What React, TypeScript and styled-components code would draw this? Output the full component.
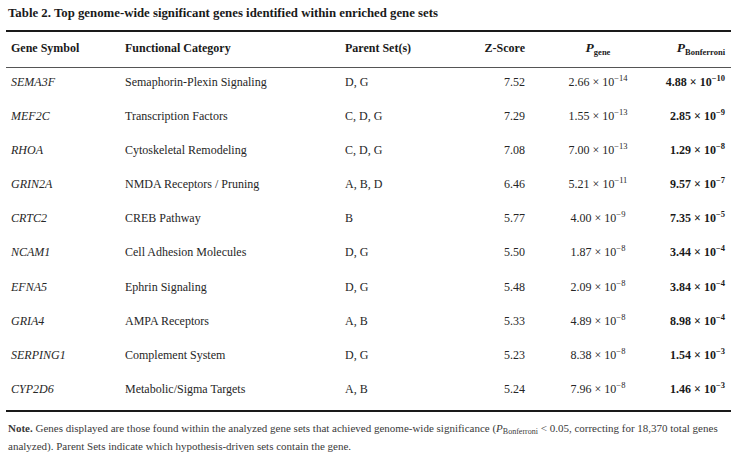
import React from "react";
import styled, { createGlobalStyle } from "styled-components";

const Global = createGlobalStyle`
  html, body { margin: 0; padding: 0; background: #fff; }
  body { font-family: "Liberation Serif", "Times New Roman", serif; color: #262626; }
`;

const Page = styled.div`
  width: 734px;
  height: 452px;
  padding: 5px 3px 0 6px;
  box-sizing: border-box;
  overflow: hidden;
`;

const Title = styled.div`
  font-weight: bold;
  font-size: 12.8px;
  line-height: 16px;
  color: #1a1a1a;
  padding-left: 2px;
`;

const Table = styled.div`
  margin-top: 9px;
  border-top: 2px solid #1a1a1a;
  border-bottom: 2px solid #1a1a1a;
`;

const COLS = "114px 220px 110px 106px 84px 1fr";

const HeadRow = styled.div`
  display: grid;
  grid-template-columns: ${COLS};
  align-items: baseline;
  padding: 9px 0 12px;
  border-bottom: 1px solid #555;
  font-weight: bold;
  font-size: 12px;
  line-height: 14px;
  color: #1a1a1a;
`;

const Row = styled.div`
  display: grid;
  grid-template-columns: ${COLS};
  align-items: baseline;
  height: 34.2px;
  box-sizing: border-box;
  padding-top: 6.5px;
  font-size: 12px;
  line-height: 14px;
`;

const Cell = styled.div<{ $align?: "left" | "right" | "center"; $italic?: boolean; $bold?: boolean; $pr?: number }>`
  padding-left: 5px;
  padding-right: ${(p) => (p.$pr ?? 6)}px;
  text-align: ${(p) => p.$align ?? "left"};
  font-style: ${(p) => (p.$italic ? "italic" : "normal")};
  font-weight: ${(p) => (p.$bold ? "bold" : "inherit")};
  color: ${(p) => (p.$bold ? "#1a1a1a" : "inherit")};
  white-space: nowrap;
`;

const PSym = styled.span`
  font-style: italic;
  font-weight: bold;
  font-size: 13.5px;
`;

const Sub = styled.sub`
  font-size: 8.5px;
  font-style: normal;
  vertical-align: -3px;
  line-height: 0;
`;

const Sup = styled.sup`
  font-size: 8.5px;
  vertical-align: 5px;
  line-height: 0;
`;

const Note = styled.div`
  margin-top: 7px;
  font-size: 11px;
  line-height: 18px;
  color: #3a3a3a;
  padding-left: 2px;
`;

const NoteLine = styled.div`
  white-space: nowrap;
`;

const NoteSub = styled.span`
  font-size: 8px;
  position: relative;
  top: 2px;
  line-height: 0;
`;

type R = { gene: string; cat: string; sets: string; z: string; pg: [string, string]; pb: [string, string] };

const rows: R[] = [
  { gene: "SEMA3F", cat: "Semaphorin-Plexin Signaling", sets: "D, G", z: "7.52", pg: ["2.66", "−14"], pb: ["4.88", "−10"] },
  { gene: "MEF2C", cat: "Transcription Factors", sets: "C, D, G", z: "7.29", pg: ["1.55", "−13"], pb: ["2.85", "−9"] },
  { gene: "RHOA", cat: "Cytoskeletal Remodeling", sets: "C, D, G", z: "7.08", pg: ["7.00", "−13"], pb: ["1.29", "−8"] },
  { gene: "GRIN2A", cat: "NMDA Receptors / Pruning", sets: "A, B, D", z: "6.46", pg: ["5.21", "−11"], pb: ["9.57", "−7"] },
  { gene: "CRTC2", cat: "CREB Pathway", sets: "B", z: "5.77", pg: ["4.00", "−9"], pb: ["7.35", "−5"] },
  { gene: "NCAM1", cat: "Cell Adhesion Molecules", sets: "D, G", z: "5.50", pg: ["1.87", "−8"], pb: ["3.44", "−4"] },
  { gene: "EFNA5", cat: "Ephrin Signaling", sets: "D, G", z: "5.48", pg: ["2.09", "−8"], pb: ["3.84", "−4"] },
  { gene: "GRIA4", cat: "AMPA Receptors", sets: "A, B", z: "5.33", pg: ["4.89", "−8"], pb: ["8.98", "−4"] },
  { gene: "SERPING1", cat: "Complement System", sets: "D, G", z: "5.23", pg: ["8.38", "−8"], pb: ["1.54", "−3"] },
  { gene: "CYP2D6", cat: "Metabolic/Sigma Targets", sets: "A, B", z: "5.24", pg: ["7.96", "−8"], pb: ["1.46", "−3"] },
];

const Sci = ({ v }: { v: [string, string] }) => (
  <>
    {v[0]} × 10<Sup>{v[1]}</Sup>
  </>
);

export default function App() {
  return (
    <Page>
      <Global />
      <Title>Table 2. Top genome-wide significant genes identified within enriched gene sets</Title>
      <Table>
        <HeadRow>
          <Cell>Gene Symbol</Cell>
          <Cell>Functional Category</Cell>
          <Cell>Parent Set(s)</Cell>
          <Cell $align="right" $pr={31}>Z-Score</Cell>
          <Cell $align="center" $pr={5}>
            <PSym>P</PSym>
            <Sub>gene</Sub>
          </Cell>
          <Cell $align="right">
            <PSym>P</PSym>
            <Sub>Bonferroni</Sub>
          </Cell>
        </HeadRow>
        {rows.map((r) => (
          <Row key={r.gene}>
            <Cell $italic>{r.gene}</Cell>
            <Cell>{r.cat}</Cell>
            <Cell>{r.sets}</Cell>
            <Cell $align="right" $pr={31}>{r.z}</Cell>
            <Cell $align="center" $pr={5}>
              <Sci v={r.pg} />
            </Cell>
            <Cell $align="right" $bold>
              <Sci v={r.pb} />
            </Cell>
          </Row>
        ))}
      </Table>
      <Note>
        <NoteLine>
          <b>Note.</b> Genes displayed are those found within the analyzed gene sets that achieved genome-wide significance (
          <i>P</i>
          <NoteSub>Bonferroni</NoteSub> &lt; 0.05, correcting for 18,370 total genes
        </NoteLine>
        <NoteLine>analyzed). Parent Sets indicate which hypothesis-driven sets contain the gene.</NoteLine>
      </Note>
    </Page>
  );
}
